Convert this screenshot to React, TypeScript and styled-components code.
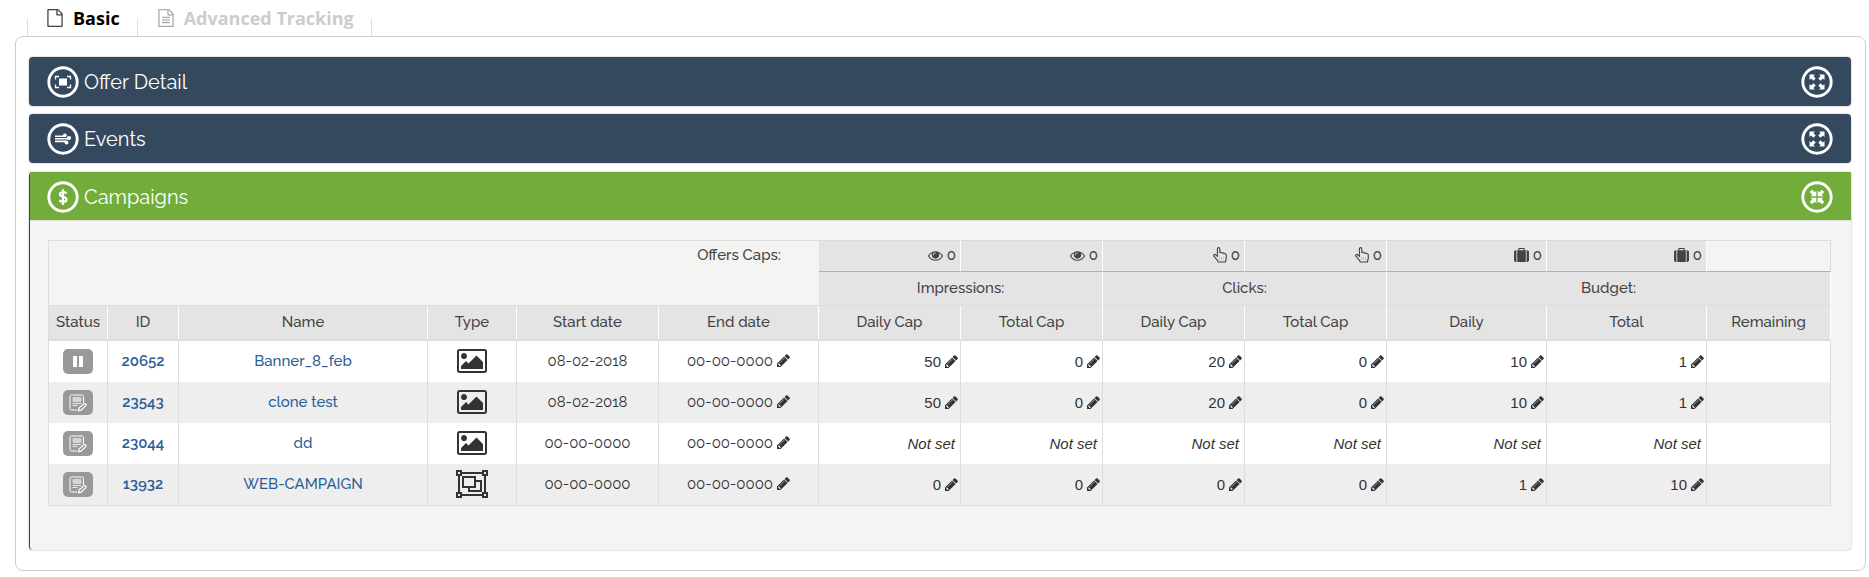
import React from 'react';
import styled, { createGlobalStyle, css } from 'styled-components';

const GlobalStyle = createGlobalStyle`
  * { box-sizing: border-box; }
  body {
    margin: 0;
    background: #fff;
    color: #333;
    font-family: Raleway, Lato, sans-serif;
    font-size: 15px;
  }
  button {
    margin: 0;
    padding: 0;
    border: 0;
    background: none;
    color: inherit;
    font: inherit;
    cursor: pointer;
  }
  svg { display: block; flex: none; }
`;

/* ---------- icons ---------- */

const PencilIcon = () => (
  <svg width="13" height="13" viewBox="128 128 1536 1536" fill="currentColor" aria-hidden="true">
    <path d="M491 1536l91-91-235-235-91 91v107h128v128h107zm523-928q0-22-22-22-10 0-17 7l-542 542q-7 7-7 17 0 22 22 22 10 0 17-7l542-542q7-7 7-17zm-54-192l416 416-832 832h-416v-416zm683 96q0 53-37 90l-166 166-416-416 166-165q36-38 90-38 53 0 91 38l235 234q37 39 37 91z" />
  </svg>
);

const FileIcon = ({ lined }: { lined?: boolean }) => (
  <svg width="16" height="18" viewBox="128 0 1536 1792" fill="currentColor" aria-hidden="true">
    <path d="M1596 380q28 28 48 76t20 88v1152q0 40-28 68t-68 28h-1344q-40 0-68-28t-28-68v-1600q0-40 28-68t68-28h896q40 0 88 20t76 48zm-444-244v376h376q-10-29-22-41l-313-313q-12-12-41-22zm384 1528v-1024h-416q-40 0-68-28t-28-68v-416h-768v1536h1280z" />
    {lined && <path d="M512 768h768v128h-768zM512 1024h768v128h-768zM512 1280h768v128h-768z" />}
  </svg>
);

const EyeIcon = () => (
  <svg width="15" height="15" viewBox="0 0 1792 1792" fill="currentColor" aria-hidden="true">
    <path d="M1664 960q-152-236-381-353 61 104 61 225 0 185-131.5 316.5t-316.5 131.5-316.5-131.5-131.5-316.5q0-121 61-225-229 117-381 353 133 205 333.5 326.5t434.5 121.5 434.5-121.5 333.5-326.5zm-720-384q0-20-14-34t-34-14q-125 0-214.5 89.5t-89.5 214.5q0 20 14 34t34 14 34-14 14-34q0-86 61-147t147-61q20 0 34-14t14-34zm848 384q0 34-20 69-140 230-376.5 368.5t-499.5 138.5-499.5-139-376.5-368q-20-35-20-69t20-69q140-229 376.5-368t499.5-139 499.5 139 376.5 368q20 35 20 69z" />
  </svg>
);

const PointerIcon = () => (
  <svg width="14" height="16" viewBox="0 0 14 16" fill="none" stroke="currentColor" strokeWidth="1.1" strokeLinejoin="round" strokeLinecap="round" aria-hidden="true">
    <path d="M4.400 9.400V2c0-1.900 2.400-1.900 2.400 0v3.600c.4-.7 2-.6 2.200.5.5-.6 1.900-.4 2 .7.700-.5 2.300-.1 2.300 1.100v2.900c0 1.500-.7 2-.8 4.200H5.200c-.2-1.500-1.300-2.300-2.400-3.700L.9 9.200c-.9-1.300.9-2.500 1.900-1.400z" />
    <path d="M6.500 10.500v2M8.500 10.500v2M10.500 10.500v2" strokeWidth=".5" opacity=".4" />
  </svg>
);

const SuitcaseIcon = () => (
  <svg width="15" height="15" viewBox="0 0 1792 1792" fill="currentColor" aria-hidden="true">
    <path d="M640 256h512v-128h-512v128zm-352 0v1408h-64q-92 0-158-66t-66-158v-960q0-92 66-158t158-66h64zm1120 0v1408h-1024v-1408h128v-160q0-40 28-68t68-28h576q40 0 68 28t28 68v160h128zm384 224v960q0 92-66 158t-158 66h-64v-1408h64q92 0 158 66t66 158z" />
  </svg>
);

const PictureIcon = () => (
  <svg width="30" height="24" viewBox="0 128 1920 1536" fill="#333" role="img" aria-label="Banner">
    <path d="M640 576q0 80-56 136t-136 56-136-56-56-136 56-136 136-56 136 56 56 136zm1024 384v448h-1408v-192l320-320 160 160 512-512zm96-704h-1600q-13 0-22.500 9.500t-9.500 22.500v1216q0 13 9.500 22.500t22.500 9.500h1600q13 0 22.500-9.500t9.500-22.500v-1216q0-13-9.500-22.500t-22.500-9.500zm160 32v1216q0 66-47 113t-113 47h-1600q-66 0-113-47t-47-113v-1216q0-66 47-113t113-47h1600q66 0 113 47t47 113z" />
  </svg>
);

const GroupIcon = () => (
  <svg width="32" height="28" viewBox="0 0 32 28" fill="none" stroke="#333" strokeWidth="2" role="img" aria-label="Web">
    <path d="M5 3h22M5 25h22M3 5v18M29 5v18" />
    <path d="M1 1h4v4H1zM27 1h4v4h-4zM1 23h4v4H1zM27 23h4v4h-4z" />
    <path d="M7 7h12v10H7zM20 11h5v10H13v-4" />
  </svg>
);

const PauseIcon = () => (
  <svg width="12" height="13" viewBox="0 0 12 13" fill="#fff" aria-hidden="true">
    <path d="M1 1h4v11H1zM7 1h4v11H7z" />
  </svg>
);

const DraftIcon = () => (
  <svg width="18" height="18" viewBox="0 0 18 18" fill="none" stroke="#fff" aria-hidden="true">
    <path d="M14.500 9V2.500c0-1-.5-1.500-1.500-1.500H2.500C1.500 1 1 1.500 1 2.500v12c0 1 .5 1.500 1.500 1.500H8" />
    <path d="M4 3.500h8v4H4z" fill="#fff" opacity=".6" />
    <path d="M3.500 9.500h9M3.500 11.500h5" opacity=".8" />
    <path d="M9.500 16.700l.6-2.800 5-4.200c1.200-.6 2.500.8 1.700 1.900l-4.700 4.500z" strokeWidth="1.200" />
  </svg>
);

type HeadGlyph = 'detail' | 'events' | 'dollar' | 'expand' | 'compress';

const glyphs: Record<HeadGlyph, React.ReactNode> = {
  detail: (
    <>
      <path d="M8.500 13.500V10.500h3.500M20 10.500h3.500v3M23.500 18.500v3H20M12 21.500H8.500v-3" fill="none" stroke="#fff" strokeWidth="1.300" />
      <rect x="12" y="12.500" width="8" height="7" fill="#fff" />
    </>
  ),
  events: (
    <>
      <path d="M8 13.200h10M8 15.800h13M8 18.400h11" fill="none" stroke="#fff" strokeWidth="1.600" />
      <circle cx="17.800" cy="12.300" r="1.900" fill="#fff" />
      <circle cx="22" cy="15" r="2.100" fill="#fff" />
      <circle cx="19.500" cy="19.500" r="2" fill="#fff" />
    </>
  ),
  dollar: (
    <path d="M19.500 12.400c-2-1.700-6.600-1.700-6.600 1 0 3.200 6.600 1.600 6.600 5 0 2.900-5 2.800-7.200.9M16 8.300v15.600" fill="none" stroke="#fff" strokeWidth="2.200" />
  ),
  expand: (
    <g fill="#fff">
      <path d="M9 9h5.500l-1.600 1.600 2.300 2.300-2.300 2.300-2.300-2.300L9 14.500z" />
      <path d="M24 9h-5.500l1.600 1.600-2.300 2.300 2.300 2.300 2.300-2.300 1.600 1.600z" />
      <path d="M9 24h5.500l-1.600-1.600 2.300-2.300-2.300-2.300-2.300 2.300L9 18.500z" />
      <path d="M24 24h-5.500l1.600-1.600-2.300-2.300 2.300-2.300 2.300 2.300 1.600-1.600z" />
    </g>
  ),
  compress: (
    <g fill="#fff">
      <path d="M15.800 15.800h-5.600l1.600-1.600-2.600-2.600 2.400-2.400 2.600 2.600 1.600-1.600z" />
      <path d="M17.200 15.800h5.600l-1.600-1.600 2.600-2.600-2.400-2.400-2.600 2.600-1.600-1.600z" />
      <path d="M15.800 17.200h-5.600l1.600 1.600-2.600 2.600 2.400 2.400 2.600-2.600 1.600 1.600z" />
      <path d="M17.200 17.200h5.600l-1.600 1.600 2.600 2.600-2.400 2.400-2.600-2.600-1.600 1.600z" />
    </g>
  ),
};

const CircleIcon = ({ glyph }: { glyph: HeadGlyph }) => (
  <svg width="32" height="32" viewBox="0 0 32 32" aria-hidden="true">
    <circle cx="16" cy="16" r="14.200" fill="none" stroke="#fff" strokeWidth="2.900" />
    {glyph === 'expand' || glyph === 'compress' ? <g transform="translate(-.5 -.5)">{glyphs[glyph]}</g> : glyphs[glyph]}
  </svg>
);

/* ---------- layout ---------- */

const Page = styled.main`
  padding: 0 3px 6px 15px;
`;

const TabList = styled.div`
  display: flex;
  height: 36px;
  padding-left: 12px;
  background: linear-gradient(#ddd, #ddd) 12px 100% / 1px 17px no-repeat;
`;

const Tab = styled.button<{ $active?: boolean }>`
  display: flex;
  align-items: center;
  gap: 10px;
  padding: 0 18px 0 20px;
  background: linear-gradient(#ddd, #ddd) 100% 100% / 1px 17px no-repeat;
  color: ${(p) => (p.$active ? '#000' : '#ccc')};
  font-family: 'Open Sans', sans-serif;
  font-size: 18px;
  font-weight: 700;
  svg { color: ${(p) => (p.$active ? '#444' : '#aaa')}; }
`;

const Panel = styled.section`
  display: flex;
  flex-direction: column;
  gap: 8px;
  padding: 20px 14px 20px 13px;
  border: 1px solid #ccc;
  border-radius: 8px;
`;

const Section = styled.section<{ $open?: boolean }>`
  border-radius: 4px;
  box-shadow: 0 0 2px rgba(0, 0, 0, 0.35);
  ${(p) =>
    p.$open &&
    css`
      margin-top: 1px;
      border-left: 1px solid #34495e;
      background: #f4f4f2;
    `}
`;

const SectionHeader = styled.button<{ $open?: boolean }>`
  display: flex;
  align-items: center;
  gap: 5px;
  width: 100%;
  height: ${(p) => (p.$open ? 48 : 49)}px;
  padding: ${(p) => (p.$open ? '1px 18px 0 17px' : '0 18px')};
  border-radius: ${(p) => (p.$open ? 0 : 4)}px;
  background: ${(p) => (p.$open ? '#72ac3b' : '#34495e')};
  color: #fff;
  font-size: 20px;
`;

const SectionTitle = styled.span`
  flex: 1;
  text-align: left;
`;

const SectionBody = styled.div`
  padding: 19px 20px 44px 18px;
  border-top: 1px solid #ddd;
`;

/* ---------- table ---------- */

const Table = styled.table`
  width: 100%;
  table-layout: fixed;
  border-collapse: separate;
  border-spacing: 0;
  border: 1px solid #ddd;
  border-right: 0;
  line-height: 20px;
`;

const headCell = css`
  padding: 0 0 2px;
  color: #444;
  font-weight: 500;
  text-align: center;
`;

const BlankCell = styled.td`
  ${headCell}
  padding-top: 4px;
  border-bottom: 1px solid #ddd;
  vertical-align: top;
`;

const CapCell = styled.td<{ $empty?: boolean }>`
  ${headCell}
  height: 31px;
  padding-right: 4px;
  border-right: 1px solid ${(p) => (p.$empty ? '#ddd' : '#fff')};
  border-bottom: 1px solid #b0b0b0;
  background: ${(p) => (p.$empty ? 'transparent' : '#e4e4e4')};
`;

const CapValue = styled.span`
  display: flex;
  align-items: center;
  justify-content: flex-end;
  gap: 4px;
`;

const GroupHead = styled.th`
  ${headCell}
  height: 34px;
  border-right: 1px solid #fff;
  border-bottom: 1px solid #ddd;
  background: #e4e4e4;
`;

const ColumnHead = styled.th`
  ${headCell}
  height: 35px;
  border-right: 1px solid #fff;
  border-bottom: 2px solid #ddd;
  background: #e4e4e4;
`;

const Row = styled.tr`
  background: #fff;
  &:nth-child(even) { background: #eee; }
`;

const Cell = styled.td`
  height: 41px;
  padding: 0;
  border-right: 1px solid #ddd;
  text-align: center;
`;

const TextCell = styled(Cell)`
  padding-bottom: 2px;
`;

const ValueCell = styled(Cell)`
  padding-right: 2px;
  font-family: 'Liberation Sans', Arial, sans-serif;
`;

const Centered = styled.span`
  display: flex;
  align-items: center;
  justify-content: center;
  gap: 4px;
`;

const Value = styled(Centered)`
  justify-content: flex-end;
`;

const NotSet = styled.em`
  display: block;
  padding-right: 3px;
  text-align: right;
`;

const DateText = styled.span`
  font-weight: 400;
`;

const RowLink = styled.a`
  color: #2a6099;
  font-weight: ${(p: { $strong?: boolean }) => (p.$strong ? 600 : 500)};
  text-decoration: none;
`;

const StatusButton = styled.button`
  display: flex;
  align-items: center;
  justify-content: center;
  width: 30px;
  height: 25px;
  margin: 0 auto;
  border-radius: 5px;
  background: #999;
`;

/* ---------- data ---------- */

const columnWidths = [59, 71, 249, 89, 142, 160, 142, 142, 142, 142, 160, 160, 124];

const columnNames = [
  'Status', 'ID', 'Name', 'Type', 'Start date', 'End date',
  'Daily Cap', 'Total Cap', 'Daily Cap', 'Total Cap', 'Daily', 'Total', 'Remaining',
];

const caps = [EyeIcon, EyeIcon, PointerIcon, PointerIcon, SuitcaseIcon, SuitcaseIcon];

interface Campaign {
  id: string;
  name: string;
  paused?: boolean;
  web?: boolean;
  start: string;
  end: string;
  values: (number | null)[];
}

const campaigns: Campaign[] = [
  { id: '20652', name: 'Banner_8_feb', paused: true, start: '08-02-2018', end: '00-00-0000', values: [50, 0, 20, 0, 10, 1] },
  { id: '23543', name: 'clone test', start: '08-02-2018', end: '00-00-0000', values: [50, 0, 20, 0, 10, 1] },
  { id: '23044', name: 'dd', start: '00-00-0000', end: '00-00-0000', values: [null, null, null, null, null, null] },
  { id: '13932', name: 'WEB-CAMPAIGN', web: true, start: '00-00-0000', end: '00-00-0000', values: [0, 0, 0, 0, 1, 10] },
];

const CampaignRow = ({ campaign }: { campaign: Campaign }) => (
  <Row>
    <Cell>
      <StatusButton type="button" aria-label={campaign.paused ? 'Paused' : 'Draft'}>
        {campaign.paused ? <PauseIcon /> : <DraftIcon />}
      </StatusButton>
    </Cell>
    <TextCell><RowLink href="#" $strong>{campaign.id}</RowLink></TextCell>
    <TextCell><RowLink href="#">{campaign.name}</RowLink></TextCell>
    <TextCell><Centered>{campaign.web ? <GroupIcon /> : <PictureIcon />}</Centered></TextCell>
    <TextCell><DateText>{campaign.start}</DateText></TextCell>
    <TextCell>
      <Centered>
        <DateText>{campaign.end}</DateText>
        <button type="button" aria-label="Edit end date"><PencilIcon /></button>
      </Centered>
    </TextCell>
    {campaign.values.map((value, i) => (
      <ValueCell key={i}>
        {value === null ? (
          <NotSet>Not set</NotSet>
        ) : (
          <Value>
            {value}
            <button type="button" aria-label="Edit value"><PencilIcon /></button>
          </Value>
        )}
      </ValueCell>
    ))}
    <Cell />
  </Row>
);

const CampaignTable = () => (
  <Table>
    <colgroup>
      {columnWidths.map((width, i) => <col key={i} width={width} />)}
    </colgroup>
    <thead>
      <tr>
        <BlankCell colSpan={5} rowSpan={2} />
        <BlankCell rowSpan={2}>Offers Caps:</BlankCell>
        {caps.map((Icon, i) => (
          <CapCell key={i}><CapValue><Icon />0</CapValue></CapCell>
        ))}
        <CapCell $empty />
      </tr>
      <tr>
        <GroupHead colSpan={2}>Impressions:</GroupHead>
        <GroupHead colSpan={2}>Clicks:</GroupHead>
        <GroupHead colSpan={3}>Budget:</GroupHead>
      </tr>
      <tr>
        {columnNames.map((name, i) => <ColumnHead key={i}>{name}</ColumnHead>)}
      </tr>
    </thead>
    <tbody>
      {campaigns.map((campaign) => <CampaignRow key={campaign.id} campaign={campaign} />)}
    </tbody>
  </Table>
);

interface AccordionProps {
  title: string;
  glyph: HeadGlyph;
  open?: boolean;
  children?: React.ReactNode;
}

const Accordion = ({ title, glyph, open, children }: AccordionProps) => (
  <Section $open={open}>
    <SectionHeader type="button" $open={open} aria-expanded={!!open}>
      <CircleIcon glyph={glyph} />
      <SectionTitle>{title}</SectionTitle>
      <CircleIcon glyph={open ? 'compress' : 'expand'} />
    </SectionHeader>
    {open && <SectionBody>{children}</SectionBody>}
  </Section>
);

export default function App() {
  return (
    <>
      <GlobalStyle />
      <Page>
        <TabList role="tablist">
          <Tab type="button" role="tab" aria-selected="true" $active><FileIcon />Basic</Tab>
          <Tab type="button" role="tab" aria-selected="false"><FileIcon lined />Advanced Tracking</Tab>
        </TabList>
        <Panel>
          <Accordion title="Offer Detail" glyph="detail" />
          <Accordion title="Events" glyph="events" />
          <Accordion title="Campaigns" glyph="dollar" open>
            <CampaignTable />
          </Accordion>
        </Panel>
      </Page>
    </>
  );
}
